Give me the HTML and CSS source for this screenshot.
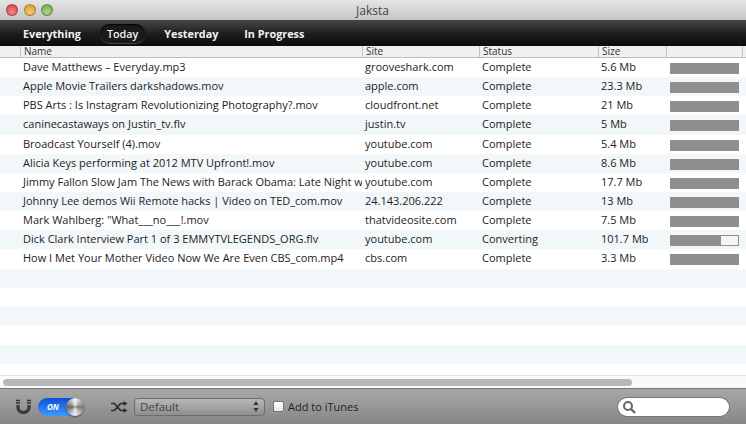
FILE: index.html
```html
<!DOCTYPE html>
<html lang="en">
<head>
    <meta charset="UTF-8">
    <title>Jaksta</title>
    <link rel="stylesheet" href="styles.css">
</head>
<body>

<div class="window">
    <div class="titlebar">
        <div class="lights">
            <span class="light red"></span>
            <span class="light yellow"></span>
            <span class="light green"></span>
        </div>
        <div class="title">Jaksta</div>
    </div>

    <div class="tabs">
        <div class="tab">Everything</div>
        <div class="tab active">Today</div>
        <div class="tab">Yesterday</div>
        <div class="tab">In Progress</div>
    </div>

    <div class="row head">
        <div class="cell name">Name</div>
        <div class="cell site">Site</div>
        <div class="cell status">Status</div>
        <div class="cell size">Size</div>
        <div class="cell bar"></div>
        <div class="cell end"></div>
    </div>

    <div class="list">
        <div class="row"><div class="cell name">Dave Matthews – Everyday.mp3</div><div class="cell site">grooveshark.com</div><div class="cell status">Complete</div><div class="cell size">5.6 Mb</div><div class="cell bar"><div class="progress"><div class="fill" style="width:100%"></div></div></div></div>
        <div class="row"><div class="cell name">Apple Movie Trailers darkshadows.mov</div><div class="cell site">apple.com</div><div class="cell status">Complete</div><div class="cell size">23.3 Mb</div><div class="cell bar"><div class="progress"><div class="fill" style="width:100%"></div></div></div></div>
        <div class="row"><div class="cell name">PBS Arts : Is Instagram Revolutionizing Photography?.mov</div><div class="cell site">cloudfront.net</div><div class="cell status">Complete</div><div class="cell size">21 Mb</div><div class="cell bar"><div class="progress"><div class="fill" style="width:100%"></div></div></div></div>
        <div class="row"><div class="cell name">caninecastaways on Justin_tv.flv</div><div class="cell site">justin.tv</div><div class="cell status">Complete</div><div class="cell size">5 Mb</div><div class="cell bar"><div class="progress"><div class="fill" style="width:100%"></div></div></div></div>
        <div class="row"><div class="cell name">Broadcast Yourself (4).mov</div><div class="cell site">youtube.com</div><div class="cell status">Complete</div><div class="cell size">5.4 Mb</div><div class="cell bar"><div class="progress"><div class="fill" style="width:100%"></div></div></div></div>
        <div class="row"><div class="cell name">Alicia Keys performing at 2012 MTV Upfront!.mov</div><div class="cell site">youtube.com</div><div class="cell status">Complete</div><div class="cell size">8.6 Mb</div><div class="cell bar"><div class="progress"><div class="fill" style="width:100%"></div></div></div></div>
        <div class="row"><div class="cell name">Jimmy Fallon Slow Jam The News with Barack Obama: Late Night w</div><div class="cell site">youtube.com</div><div class="cell status">Complete</div><div class="cell size">17.7 Mb</div><div class="cell bar"><div class="progress"><div class="fill" style="width:100%"></div></div></div></div>
        <div class="row"><div class="cell name">Johnny Lee demos Wii Remote hacks | Video on TED_com.mov</div><div class="cell site">24.143.206.222</div><div class="cell status">Complete</div><div class="cell size">13 Mb</div><div class="cell bar"><div class="progress"><div class="fill" style="width:100%"></div></div></div></div>
        <div class="row"><div class="cell name">Mark Wahlberg: "What___no___!.mov</div><div class="cell site">thatvideosite.com</div><div class="cell status">Complete</div><div class="cell size">7.5 Mb</div><div class="cell bar"><div class="progress"><div class="fill" style="width:100%"></div></div></div></div>
        <div class="row"><div class="cell name">Dick Clark Interview Part 1 of 3 EMMYTVLEGENDS_ORG.flv</div><div class="cell site">youtube.com</div><div class="cell status">Converting</div><div class="cell size">101.7 Mb</div><div class="cell bar"><div class="progress"><div class="fill" style="width:74%"></div></div></div></div>
        <div class="row"><div class="cell name">How I Met Your Mother Video Now We Are Even CBS_com.mp4</div><div class="cell site">cbs.com</div><div class="cell status">Complete</div><div class="cell size">3.3 Mb</div><div class="cell bar"><div class="progress"><div class="fill" style="width:100%"></div></div></div></div>
        <div class="row"></div>
        <div class="row"></div>
        <div class="row"></div>
        <div class="row"></div>
        <div class="row"></div>
    </div>

    <div class="scrollbar"><div class="thumb"></div></div>

    <div class="bottom">
        <svg class="magnet" width="15" height="15" viewBox="0 0 15 15">
            <path d="M0 1.500h4M0 4h4M11 1.500h4M11 4h4" stroke="#333" stroke-width="1.500" fill="none"/>
            <path d="M2 6v2.500a5.500 5 0 0 0 11 0V6" stroke="#3c3c3c" stroke-width="3.400" fill="none"/>
        </svg>
        <div class="switch">
            <span class="on">ON</span>
            <span class="knob"></span>
        </div>
        <svg class="shuffle" width="17" height="12" viewBox="0 0 17 12">
            <path d="M0 2.500h3.500l6 7H13M0 9.500h3.500l6-7H13" stroke="#2e2e2e" stroke-width="1.700" fill="none"/>
            <path d="M12.500 0l4 2.500-4 2.500zM12.500 7l4 2.500-4 2.500z" fill="#2e2e2e"/>
        </svg>
        <div class="select">
            <span>Default</span>
            <svg width="6" height="11" viewBox="0 0 6 11"><path d="M3 0l2.500 4h-5zM3 11l2.500-4h-5z" fill="#333"/></svg>
        </div>
        <label class="itunes"><span class="check"></span>Add to iTunes</label>
        <div class="search">
            <svg width="14" height="14" viewBox="0 0 14 14">
                <circle cx="6" cy="6" r="4" stroke="#666" stroke-width="2" fill="none"/>
                <path d="M9 9l4 4" stroke="#666" stroke-width="2.400"/>
            </svg>
        </div>
    </div>
</div>

</body>
</html>
```

FILE: styles.css
```css
html, body {
    margin: 0;
    height: 100%;
    overflow: hidden;
}
body {
    font-family: "Open Sans", sans-serif;
    font-size: 11px;
    color: #1c1c1c;
    background: white;
}
.window {
    display: flex;
    flex-direction: column;
    height: 424px;
}

/* title bar */
.titlebar {
    height: 20px;
    display: flex;
    align-items: center;
    position: relative;
    background: linear-gradient(to bottom, #e4e4e4, #c6c6c6);
}
.lights {
    display: flex;
    gap: 5.5px;
    padding-left: 6px;
}
.light {
    width: 12px;
    height: 12px;
    border-radius: 50%;
    border: 1px solid rgba(0, 0, 0, 0.25);
    box-sizing: border-box;
}
.red { background: radial-gradient(circle at 50% 70%, #f08a8c, #d9363e); }
.yellow { background: radial-gradient(circle at 50% 70%, #f3cd85, #d9921f); }
.green { background: radial-gradient(circle at 50% 70%, #b0d68c, #63a53c); }
.title {
    position: absolute;
    left: -1px;
    right: 0;
    text-align: center;
    font-size: 12px;
    color: #444;
}

/* dark toolbar */
.tabs {
    height: 26px;
    display: flex;
    align-items: center;
    padding-left: 13px;
    gap: 6px;
    background: linear-gradient(to bottom, #484848, #1c1c1c 55%, #0c0c0c);
}
.tab {
    font-weight: bold;
    font-size: 10.8px;
    color: #f2f2f2;
    padding: 2px 10px;
}
.tab.active {
    padding: 2px 7px;
    margin: 0 3px;
    font-weight: 600;
    border-radius: 10px;
    background: #1a1a1a;
    box-shadow: inset 0 1px 2px #000, 0 1px 0 #444;
}

/* table */
.row {
    display: flex;
    height: 19.15px;
    line-height: 18px;
}
.head {
    height: 12px;
    line-height: 11px;
    font-size: 10px;
    color: #333;
    box-sizing: border-box;
    background: #f0f0f0;
    border-bottom: 1px solid #bdbdbd;
}
.cell {
    box-sizing: border-box;
    padding-left: 3px;
    white-space: nowrap;
    overflow: hidden;
}
.name { margin-left: 20px; width: 342px; }
.site { width: 117px; }
.status { width: 119px; }
.size { width: 68px; }
.bar { width: 76px; padding-left: 4px; }
.end { flex: 1; }
.head .cell {
    border-left: 1px solid #c4c4c4;
    padding-left: 3px;
    overflow: visible;
}
.list {
    flex: 1;
    overflow: hidden;
}
.list .row:nth-child(even) { background: #f2f7fa; }
.progress {
    width: 69px;
    height: 11px;
    margin-top: 5px;
    box-sizing: border-box;
    background: #f5f5f5;
    border: 1px solid #8f8f8f;
}
.fill {
    height: 100%;
    background: #8f8f8f;
}

/* scrollbar */
.scrollbar {
    height: 13px;
    box-sizing: border-box;
    padding: 3px 3px 2px;
    background: #fafafa;
    border-top: 1px solid #e4e4e4;
}
.thumb {
    width: 629px;
    height: 7px;
    border-radius: 4px;
    background: #b9b7ba;
}

/* bottom bar */
.bottom {
    height: 36px;
    box-sizing: border-box;
    display: flex;
    align-items: center;
    padding-left: 16px;
    background: linear-gradient(to bottom, #a8a8a8, #868686);
    border-top: 1px solid #777;
}
.switch {
    position: relative;
    width: 45px;
    height: 18px;
    margin-left: 7px;
    border-radius: 9px;
    background: linear-gradient(to bottom, #0a50d8, #3f9bff);
}
.on {
    display: block;
    padding-left: 9px;
    font-size: 8px;
    font-weight: bold;
    font-style: italic;
    line-height: 18px;
    color: white;
}
.knob {
    position: absolute;
    right: -1px;
    top: 0;
    width: 18px;
    height: 18px;
    border-radius: 50%;
    background: conic-gradient(#f5f5f5, #777, #eee, #666, #f5f5f5);
    box-shadow: 0 1px 2px rgba(0, 0, 0, 0.5);
}
.shuffle { margin-left: 28px; }
.select {
    width: 131px;
    height: 18px;
    margin-left: 6px;
    padding: 0 5px 0 5px;
    box-sizing: border-box;
    display: flex;
    align-items: center;
    justify-content: space-between;
    font-size: 11.5px;
    color: #444;
    border: 1px solid #6c6c6c;
    border-radius: 4px;
    background: linear-gradient(to bottom, #b8b8b8, #8e8e8e);
}
.itunes {
    display: flex;
    align-items: center;
    margin-left: 8px;
    gap: 4px;
    color: #1e1e1e;
}
.check {
    width: 9px;
    height: 9px;
    border: 1px solid #777;
    border-radius: 2px;
    background: linear-gradient(to bottom, #fff, #e6e6e6);
}
.search {
    width: 111px;
    height: 18px;
    margin-left: auto;
    margin-right: 17px;
    padding-left: 4px;
    box-sizing: border-box;
    display: flex;
    align-items: center;
    border-radius: 9px;
    background: white;
    box-shadow: 0 0 0 1px #777;
}
```
